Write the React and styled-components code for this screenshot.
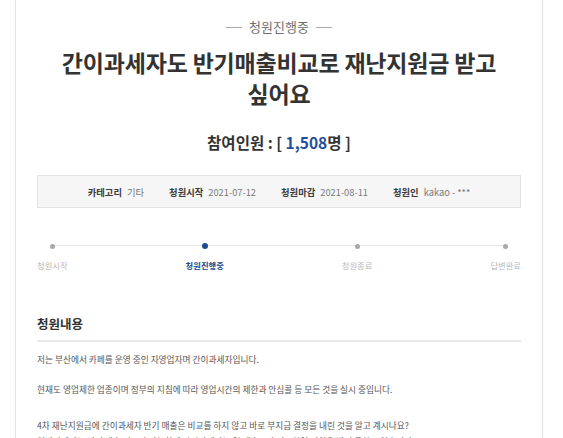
import React from 'react';
import styled, { createGlobalStyle } from 'styled-components';

const GlobalStyle = createGlobalStyle`
  html, body {
    margin: 0;
    padding: 0;
    background: #fff;
  }
  body {
    font-family: "Noto Sans CJK KR", "Noto Sans", sans-serif;
    color: #333;
  }
`;

const Page = styled.div`
  height: 438px;
  overflow: hidden;
`;

const Card = styled.article`
  box-sizing: border-box;
  width: 528px;
  min-height: 438px;
  margin-left: 15px;
  padding: 19px 21px 0;
  background: #fff;
  border-left: 1px solid #e4e4e4;
  border-right: 1px solid #e4e4e4;
  box-shadow: 0 0 2px rgba(0, 0, 0, 0.04);
`;

const Status = styled.div`
  display: flex;
  align-items: center;
  justify-content: center;
  gap: 7px;
  font-size: 13px;
  line-height: 16px;
  color: #6f6f6f;

  &::before,
  &::after {
    content: '';
    width: 16px;
    height: 1px;
    background: #a8a8a8;
  }
`;

const Title = styled.h1`
  margin: 12px 0 0;
  text-align: center;
  font-size: 23px;
  line-height: 31px;
  font-weight: 700;
  color: #333;
  letter-spacing: -0.2px;
`;

const Count = styled.div`
  margin-top: 23px;
  text-align: center;
  font-size: 15.5px;
  line-height: 20px;
  font-weight: 700;
  color: #333;
`;

const Number = styled.span`
  color: #1f4f9a;
`;

const InfoBox = styled.ul`
  display: flex;
  justify-content: center;
  align-items: center;
  gap: 25px;
  height: 33px;
  margin: 23px 0 0;
  padding: 0;
  list-style: none;
  box-sizing: border-box;
  background: #f6f6f6;
  border: 1px solid #e3e3e3;
  font-size: 9.3px;
`;

const InfoItem = styled.li`
  display: flex;
  gap: 5px;
  align-items: baseline;
`;

const InfoLabel = styled.strong`
  font-weight: 700;
  color: #3a3a3a;
`;

const InfoValue = styled.span`
  color: #7a7a7a;
`;

const Steps = styled.ol`
  position: relative;
  display: flex;
  justify-content: space-between;
  margin: 33px 0 0;
  padding: 0;
  list-style: none;

  &::before {
    content: '';
    position: absolute;
    top: 4px;
    left: 16px;
    right: 16px;
    height: 1px;
    background: #e4e4e4;
  }
`;

const Step = styled.li`
  position: relative;
  display: flex;
  flex-direction: column;
  align-items: center;
  gap: 8px;
  font-size: 8.3px;
  line-height: 12px;
  color: ${({ active }) => (active ? '#234a8c' : '#b8b8b8')};
  font-weight: ${({ active }) => (active ? 700 : 400)};
`;

const Dot = styled.span`
  display: block;
  width: ${({ active }) => (active ? 6 : 5)}px;
  height: ${({ active }) => (active ? 6 : 5)}px;
  margin: ${({ active }) => (active ? '2px 0' : '2.5px 0')};
  border-radius: 50%;
  background: ${({ active }) => (active ? '#1e4a90' : '#a9a9a9')};
`;

const Section = styled.section`
  margin-top: 45px;
`;

const SectionTitle = styled.h2`
  margin: 0;
  padding-bottom: 8px;
  border-bottom: 2px solid #e9e9e9;
  font-size: 12.5px;
  line-height: 16px;
  font-weight: 700;
  color: #333;
`;

const Body = styled.div`
  padding-top: 10px;
  font-size: 8.7px;
  line-height: 16px;
  color: #555;
`;

const Para = styled.p`
  margin: ${({ gap }) => gap || 0}px 0 0;
`;

const steps = [
  { label: '청원시작' },
  { label: '청원진행중', active: true },
  { label: '청원종료' },
  { label: '답변완료' },
];

export default function App() {
  return (
    <Page>
      <GlobalStyle />
      <Card>
        <Status>청원진행중</Status>
        <Title>
          간이과세자도 반기매출비교로 재난지원금 받고
          <br />
          싶어요
        </Title>
        <Count>
          참여인원 : [ <Number>1,508</Number>명 ]
        </Count>

        <InfoBox>
          <InfoItem>
            <InfoLabel>카테고리</InfoLabel>
            <InfoValue>기타</InfoValue>
          </InfoItem>
          <InfoItem>
            <InfoLabel>청원시작</InfoLabel>
            <InfoValue>2021-07-12</InfoValue>
          </InfoItem>
          <InfoItem>
            <InfoLabel>청원마감</InfoLabel>
            <InfoValue>2021-08-11</InfoValue>
          </InfoItem>
          <InfoItem>
            <InfoLabel>청원인</InfoLabel>
            <InfoValue>kakao - ***</InfoValue>
          </InfoItem>
        </InfoBox>

        <Steps>
          {steps.map((s) => (
            <Step key={s.label} active={s.active}>
              <Dot active={s.active} />
              {s.label}
            </Step>
          ))}
        </Steps>

        <Section>
          <SectionTitle>청원내용</SectionTitle>
          <Body>
            <Para>저는 부산에서 카페를 운영 중인 자영업자며 간이과세자입니다.</Para>
            <Para gap={14}>
              현재도 영업제한 업종이며 정부의 지침에 따라 영업시간의 제한과 안심콜 등 모든 것을 실시 중입니다.
            </Para>
            <Para gap={20}>
              4차 재난지원금에 간이과세자 반기 매출은 비교를 하지 않고 바로 부지급 결정을 내린 것을 알고 계시나요?
              <br />
              일반과세자는 반기 매출 비교가 가능한데 간이과세자는 연 매출로만 비교하여 지원을 받지 못하고 있습니다.
            </Para>
          </Body>
        </Section>
      </Card>
    </Page>
  );
}
